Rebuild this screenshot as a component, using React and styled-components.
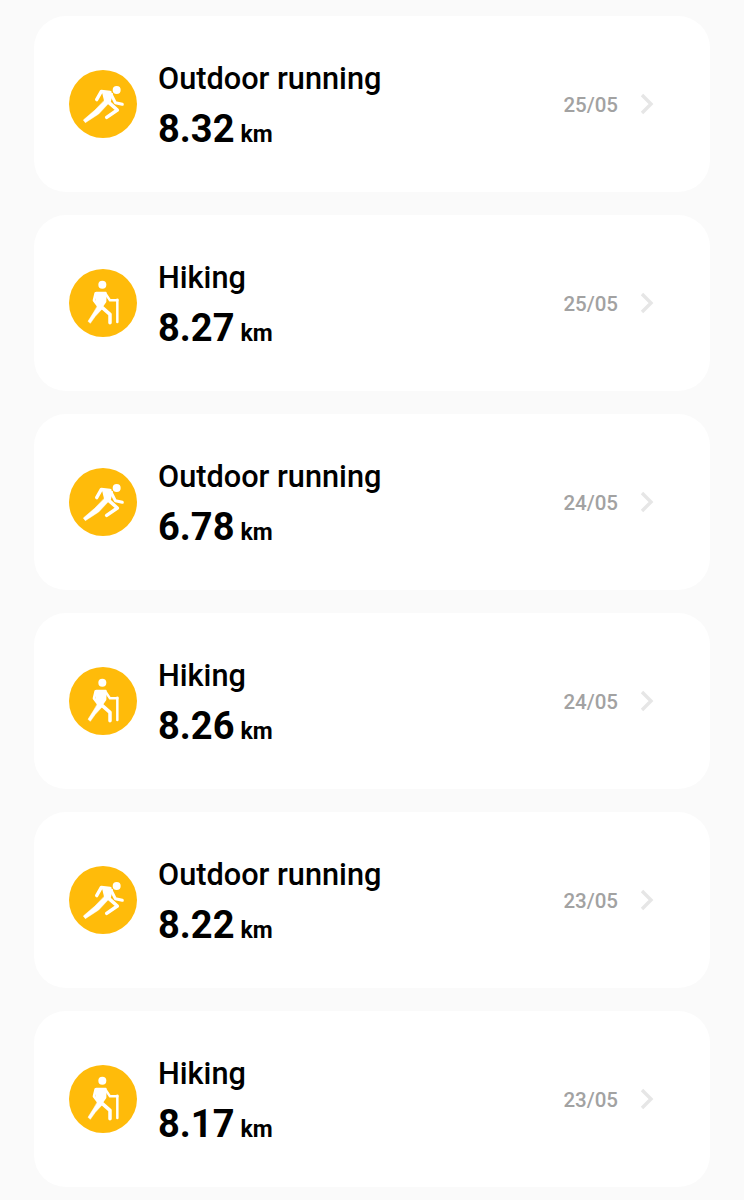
import React from "react";
import styled, { createGlobalStyle } from "styled-components";

const Global = createGlobalStyle`
  html, body { margin: 0; padding: 0; background: #fafafa; }
  body { font-family: Roboto, "Liberation Sans", sans-serif; }
`;

const Page = styled.main`
  width: 744px;
  height: 1200px;
  box-sizing: border-box;
  padding: 16px 34px 0;
  display: flex;
  flex-direction: column;
  gap: 23px;
  overflow: hidden;
`;

const Card = styled.section`
  height: 176px;
  flex: none;
  background: #fff;
  border-radius: 32px;
  display: flex;
  align-items: center;
  padding: 0 55px 0 35px;
`;

const Badge = styled.div`
  width: 68px;
  height: 68px;
  border-radius: 50%;
  background: #ffbb0a;
  flex: none;
  margin-right: 21px;
  line-height: 0;
`;

const Info = styled.div`
  flex: 1;
  display: flex;
  flex-direction: column;
  padding-top: 11px;
`;

const Title = styled.div`
  font-size: 30.7px;
  line-height: 38px;
  font-weight: 500;
  color: #000;
`;

const Stat = styled.div`
  display: flex;
  align-items: baseline;
  margin-top: 7px;
  line-height: 48px;
  color: #000;
`;

const Value = styled.span`
  font-size: 38px;
  font-weight: 700;
`;

const Unit = styled.span`
  font-size: 23px;
  font-weight: 700;
  margin-left: 6px;
`;

const DateLabel = styled.span`
  font-size: 20.5px;
  font-weight: 500;
  color: #a2a2a2;
  margin: 2px 21px 0 0;
`;

const Chevron = () => (
  <svg width="16" height="24" viewBox="0 0 16 24" fill="none">
    <path d="M3 3l9 9-9 9" stroke="#e6e6e6" strokeWidth="3.4" />
  </svg>
);

const Runner = () => (
  <svg width="68" height="68" viewBox="27 30 204 204" fill="none" stroke="#fff" strokeLinejoin="round" strokeLinecap="round">
    <circle cx="170" cy="90" r="12" fill="#fff" stroke="none" />
    <path d="M110 119L124 94L150 97" strokeWidth="10" />
    <path d="M128 96L157 101L149 130L134 122Z" fill="#fff" strokeWidth="4" />
    <path d="M155 106L166 128L187 133" strokeWidth="9" />
    <path d="M134 121L146 130L116 162L76 188L70 180L104 151Z" fill="#fff" strokeWidth="1.500" />
    <path d="M147 128L172 150L140 172" strokeWidth="10.500" />
  </svg>
);

const Hiker = () => (
  <svg width="68" height="68" viewBox="27 30 204 204" fill="none" stroke="#fff" strokeLinejoin="round" strokeLinecap="round">
    <circle cx="127" cy="77" r="12" fill="#fff" stroke="none" />
    <path d="M109 101L137 101L136 128L122 148L110 128Z" fill="#fff" strokeWidth="6" />
    <path d="M107 103L102 124L114 140" strokeWidth="8" />
    <path d="M138 106L150 124L172 124" strokeWidth="7.500" />
    <path d="M172 122V189" strokeWidth="7.500" />
    <path d="M114 139L127 149L106 172L91 193L84 187L101 160Z" fill="#fff" strokeWidth="1.500" />
    <path d="M127 146L150 166V191" strokeWidth="10.500" />
  </svg>
);

const items = [
  ["run", "8.32", "25/05"],
  ["hike", "8.27", "25/05"],
  ["run", "6.78", "24/05"],
  ["hike", "8.26", "24/05"],
  ["run", "8.22", "23/05"],
  ["hike", "8.17", "23/05"],
];

export default function App() {
  return (
    <>
      <Global />
      <Page>
        {items.map(([kind, km, date], i) => (
          <Card key={i}>
            <Badge>{kind === "run" ? <Runner /> : <Hiker />}</Badge>
            <Info>
              <Title>{kind === "run" ? "Outdoor running" : "Hiking"}</Title>
              <Stat>
                <Value>{km}</Value>
                <Unit>km</Unit>
              </Stat>
            </Info>
            <DateLabel>{date}</DateLabel>
            <Chevron />
          </Card>
        ))}
      </Page>
    </>
  );
}
